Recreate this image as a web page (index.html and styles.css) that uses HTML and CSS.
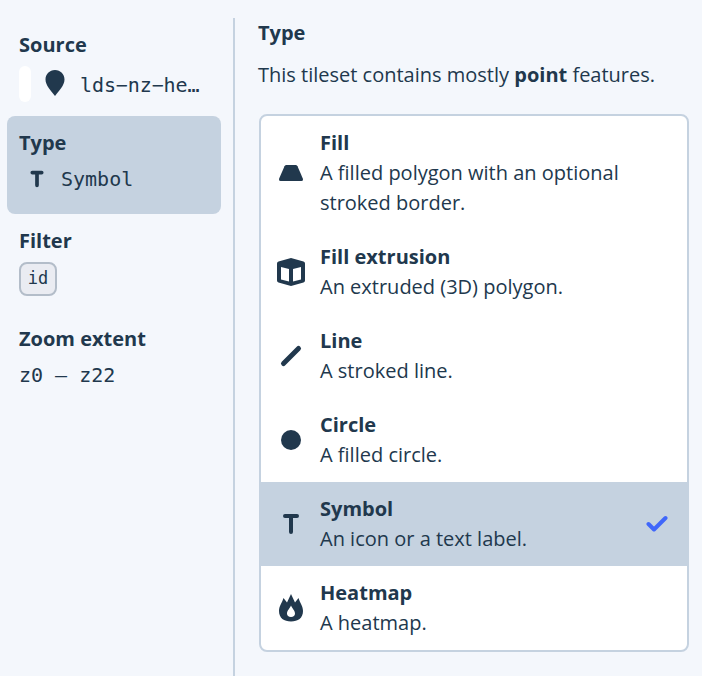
FILE: index.html
```html
<!DOCTYPE html>
<html lang="en">
<head>
<meta charset="utf-8">
<title>Layer type</title>
<link rel="stylesheet" href="styles.css">
</head>
<body>
<div class="panel">
  <nav class="sidebar">
    <section class="section">
      <h3>Source</h3>
      <div class="value source"><span class="swatch"></span>
        <svg class="pin" width="20" height="26" viewBox="0 0 20 26"><path d="M10 0C4.500 0 .5 4.300.5 9.500C.5 15.500 6 20.500 10 26C14 20.500 19.500 15.500 19.500 9.500C19.500 4.300 15.500 0 10 0Z"/></svg>
        <span class="name">lds−nz−he…</span></div>
    </section>
    <section class="section active">
      <h3>Type</h3>
      <div class="value"><svg class="small-t" width="36" height="30" viewBox="0 0 36 30"><path class="stroke" d="M13.300 8.600H22.700M18 8.600V21.300" stroke-width="3.700"/></svg><span>Symbol</span></div>
    </section>
    <section class="section">
      <h3>Filter</h3>
      <div class="chip">id</div>
    </section>
    <section class="section">
      <h3>Zoom extent</h3>
      <div class="value">z0 — z22</div>
    </section>
  </nav>
  <main class="content">
    <h3 class="heading">Type</h3>
    <p class="intro">This tileset contains mostly <b>point</b> features.</p>
    <ul class="options">
      <li><svg class="icon" viewBox="0 0 30 30"><path d="M10.500 7H19.500Q20.800 7 21.500 8.200L26.800 20.500Q27.500 23 25.500 23H4.500Q2.500 23 3.200 20.500L8.500 8.200Q9.200 7 10.500 7Z"/></svg>
        <div class="text"><h3>Fill</h3><p>A filled polygon with an optional stroked border.</p></div></li>
      <li><svg class="icon" viewBox="0 0 30 30"><path fill-rule="evenodd" d="M15 1L27.500 4.500Q29 5 29 6.500V23.500Q29 25 27.500 25.500L15 29L2.500 25.500Q1 25 1 23.500V6.500Q1 5 2.500 4.500ZM5 10V22.500L13 24.500V12ZM25 10L17 12V24.500L25 22.500Z"/></svg>
        <div class="text"><h3>Fill extrusion</h3><p>An extruded (3D) polygon.</p></div></li>
      <li><svg class="icon" viewBox="0 0 30 30"><path class="stroke" d="M7.500 22.500L22.500 7.500" stroke-width="5"/></svg>
        <div class="text"><h3>Line</h3><p>A stroked line.</p></div></li>
      <li><svg class="icon" viewBox="0 0 30 30"><circle cx="15" cy="15" r="10"/></svg>
        <div class="text"><h3>Circle</h3><p>A filled circle.</p></div></li>
      <li class="active"><svg class="icon" viewBox="0 0 30 30"><path class="stroke" d="M9 7H21M15 7V23" stroke-width="4"/></svg>
        <div class="text"><h3>Symbol</h3><p>An icon or a text label.</p></div>
        <svg class="check" width="22" height="18" viewBox="0 0 22 18"><path d="M2.500 9L8 14.500L19.500 3"/></svg></li>
      <li><svg class="icon" viewBox="0 0 30 30"><path fill-rule="evenodd" d="M15 1L19 9.500L22.500 5C24 10 27 13 27 18C27 25 22 28.500 15 28.500S3 25 3 18C3 13 6 10 7.500 5L11 9.500ZM15 12.500C13.500 16 11 17.500 11 20.500C11 22.700 12.500 24 15 24S19 22.700 19 20.500C19 17.500 16.500 16 15 12.500Z"/></svg>
        <div class="text"><h3>Heatmap</h3><p>A heatmap.</p></div></li>
    </ul>
  </main>
</div>
</body>
</html>
```

FILE: styles.css
```css
* { box-sizing: border-box; }
body {
  margin: 0;
  background: #f4f7fc;
  color: #21384d;
  font: 20px/30px "Open Sans", "Noto Sans", sans-serif;
}
h3, p, ul { margin: 0; padding: 0; }
h3 { font-size: 20px; line-height: 30px; font-weight: 700; }
b { font-weight: 700; }
svg { fill: #21384d; flex: none; display: block; }
.stroke { fill: none; stroke: #21384d; stroke-linecap: round; stroke-linejoin: round; }
.panel { display: flex; height: 676px; padding-top: 18px; overflow: hidden; }
.sidebar { width: 235px; flex: none; padding: 0 12px 0 7px; border-right: 2px solid #c5d2e0; }
.section { height: 98px; padding: 12px; border-radius: 8px; }
.section.active { background: #c5d2e0; }
.value { display: flex; align-items: center; margin-top: 6px; height: 30px; font: 20px/30px "DejaVu Sans Mono", monospace; }
.source { height: 36px; }
.swatch { width: 12px; height: 36px; border-radius: 6px; background: #fff; }
.pin { margin: 0 15px 3px 14px; }
.name { padding-top: 2px; white-space: nowrap; letter-spacing: -0.1px; }
.small-t { margin-right: 6px; }
.chip {
  width: 38px;
  height: 34px;
  margin-top: 6px;
  border: 2px solid #b3bdc9;
  border-radius: 8px;
  background: #eaecf2;
  font: 17px/28px "DejaVu Sans Mono", monospace;
  text-align: center;
}
.content { flex: 1; padding: 0 13px 0 23px; }
.intro { margin: 12px 0 24px; white-space: nowrap; }
.options { margin-left: 1px; list-style: none; background: #fff; border: 2px solid #c5d2e0; border-radius: 8px; overflow: hidden; }
.options li { display: flex; align-items: center; padding: 12px 19px 12px 15px; }
.options li.active { background: #c5d2e0; }
.icon { width: 30px; height: 30px; margin-right: 14px; }
.text { flex: 1; }
.check path { fill: none; stroke: #4067fa; stroke-width: 4; stroke-linecap: round; stroke-linejoin: round; }
```
